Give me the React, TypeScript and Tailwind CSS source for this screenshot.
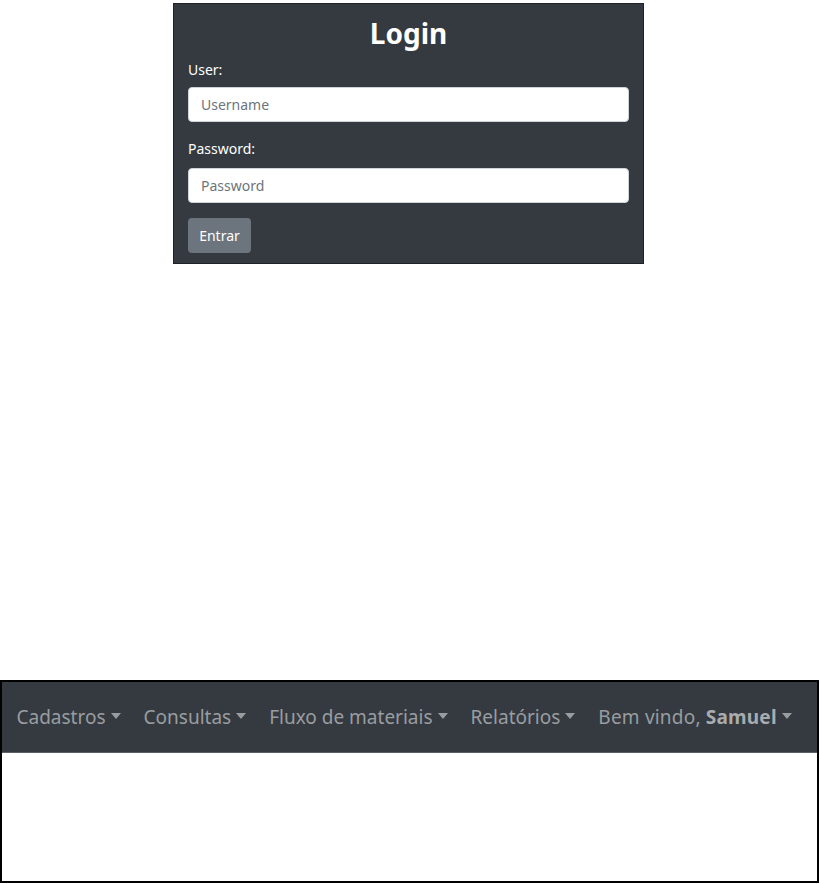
const menu = ["Cadastros", "Consultas", "Fluxo de materiais", "Relatórios"]

function Caret() {
  return (
    <span className="ml-[5px] inline-block align-[0.255em] border-t-[6px] border-x-[5.5px] border-x-transparent border-t-current" />
  )
}

export default function App() {
  return (
    <div className="min-h-[884px] bg-white font-['Noto_Sans',sans-serif] pt-[3px]">
      <div className="ml-[173px] w-[471px] bg-[#343a40] border border-[#1e2226] px-[14px] pt-[12px] pb-[10px] text-white">
        <h1 className="text-center text-[28px] leading-[34px] font-bold">Login</h1>

        <label className="block mt-[10px] text-[14px] leading-[20px]">User:</label>
        <input
          type="text"
          placeholder="Username"
          className="mt-[7px] block w-full h-[35px] rounded-[4px] bg-white border border-[#ced4da] px-[12px] text-[14px] text-[#495057] placeholder:text-[#6c757d] outline-none"
        />

        <label className="block mt-[17px] text-[14px] leading-[20px]">Password:</label>
        <input
          type="password"
          placeholder="Password"
          className="mt-[9px] block w-full h-[35px] rounded-[4px] bg-white border border-[#ced4da] px-[12px] text-[14px] text-[#495057] placeholder:text-[#6c757d] outline-none"
        />

        <button className="mt-[15px] h-[35px] w-[63px] rounded-[4px] bg-[#6c757d] text-[14px] text-white">
          Entrar
        </button>
      </div>

      <div className="mt-[416px] w-[819px] h-[203px] border-2 border-black bg-white">
        <nav className="h-[71px] bg-[#343a40] border-b border-[#5b6066] flex items-center pl-[3px] text-[19px] leading-[28px] text-[#9a9da0]">
          {menu.map((item) => (
            <a key={item} className="px-[11.5px] whitespace-nowrap">
              {item}
              <Caret />
            </a>
          ))}
          <a className="px-[11.5px] whitespace-nowrap tracking-[0.2px]">
            Bem vindo, <b className="font-bold text-[#a9acaf]">Samuel</b>
            <Caret />
          </a>
        </nav>
      </div>
    </div>
  )
}
